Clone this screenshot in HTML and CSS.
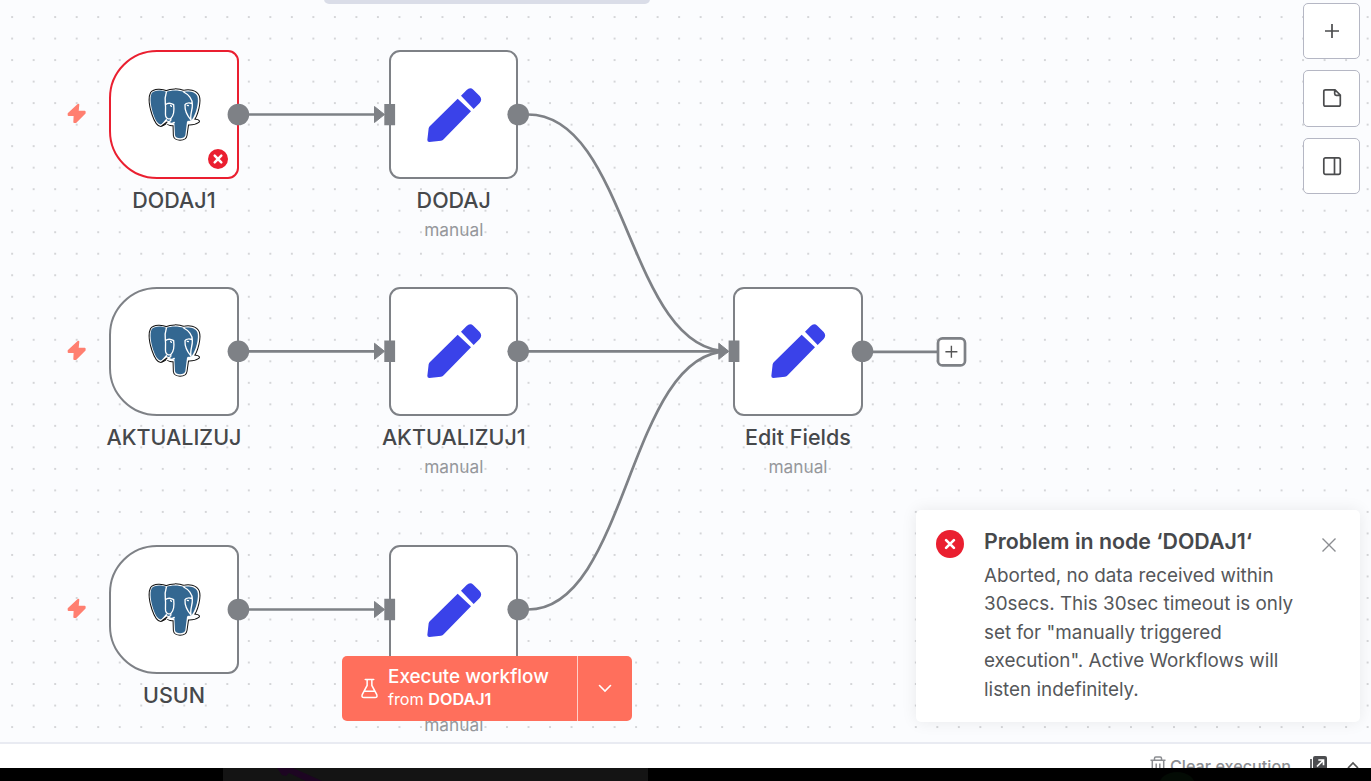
FILE: index.html
```html
<!DOCTYPE html>
<html lang="pl">
<head>
<meta charset="utf-8">
<title>Workflow</title>
<link rel="stylesheet" href="styles.css">
</head>
<body>
<svg class="defs" width="0" height="0">
  <defs>
    <symbol id="pencil" viewBox="168 140 168 168">
      <path fill="#3a42e9" d="M263 175 303 213 221 297Q218 301 213 301L178 305Q172 305 172 299L176 264Q177 260 180 257ZM273 166 290 149Q300 139 310 148L329 167Q338 178 329 188L311 206Z"/>
    </symbol>
    <symbol id="bolt" viewBox="200 306 64 68">
      <path fill="#ff7f70" stroke="#ff7f70" stroke-width="6" stroke-linejoin="round" d="M237 314 208 341V345H226L225 366H229L256 339V335H235Z"/>
    </symbol>
    <symbol id="elephant" viewBox="50 35 170 170">
      <g stroke-linecap="round" stroke-linejoin="round">
        <g fill="#111" stroke="#111" stroke-width="11">
          <path id="head" d="M108 50C95 44 72 43 64 54C57 68 62 96 69 117C75 135 84 151 93 149C98 148 105 142 109 137C115 146 124 149 132 146L133 180C134 194 164 194 166 180L171 145C184 146 196 143 203 138C200 135 194 137 187 134C199 119 209 79 203 63C197 47 174 45 160 49C145 43 122 43 108 50Z"/>
        </g>
        <use href="#head" fill="#fff" stroke="#fff" stroke-width="5"/>
        <path fill="#336791" d="M108 50C95 44 72 43 64 54C57 68 62 96 69 117C75 135 84 149 92 147C98 145 105 137 108 132C115 141 124 145 132 143L134 180C135 192 163 192 165 180L170 139L184 134C197 119 207 79 201 63C195 49 174 47 160 50C145 44 122 44 108 50Z"/>
        <g fill="none" stroke="#fff" stroke-width="4">
          <path d="M108 51C103 66 104 78 105 86C107 100 104 113 106 122C108 130 115 133 122 129C130 121 132 105 130 88C120 82 111 83 105 88M96 147 108 133M121 130C125 139 112 140 104 139C110 147 123 148 132 141"/>
          <path d="M160 50C174 57 187 72 186 88C187 103 178 119 182 133M164 88C168 82 178 82 185 85M164 89C163 106 172 122 181 133M173 138C183 141 196 140 202 138M121 90 123 93M171 90 174 91"/>
        </g>
        <path fill="none" stroke="#111" stroke-width="3.5" d="M95 151 110 140"/>
      </g>
    </symbol>
    <symbol id="error" viewBox="0 0 20 20">
      <circle cx="10" cy="10" r="10" fill="#ea1f30"/>
      <path d="m6.7 6.7 6.6 6.6m0-6.6-6.6 6.6" stroke="#fff" stroke-width="2.5" stroke-linecap="round"/>
    </symbol>
    <symbol id="error-small" viewBox="0 0 20 20">
      <circle cx="10" cy="10" r="10" fill="#ea1f30"/>
      <path d="m7.2 7.2 5.6 5.6m0-5.6-5.6 5.6" stroke="#fff" stroke-width="1.9" stroke-linecap="round"/>
    </symbol>
  </defs>
</svg>

<main class="canvas">
  <div class="top-pill"></div>

  <div class="node trigger failed col-1 row-1">
    <svg class="bolt"><use href="#bolt"/></svg>
    <svg class="elephant"><use href="#elephant"/></svg>
    <svg class="status"><use href="#error"/></svg>
    <div class="caption"><div class="name">DODAJ1</div></div>
  </div>
  <div class="node trigger col-1 row-2">
    <svg class="bolt"><use href="#bolt"/></svg>
    <svg class="elephant"><use href="#elephant"/></svg>
    <div class="caption"><div class="name">AKTUALIZUJ</div></div>
  </div>
  <div class="node trigger col-1 row-3">
    <svg class="bolt"><use href="#bolt"/></svg>
    <svg class="elephant"><use href="#elephant"/></svg>
    <div class="caption"><div class="name">USUN</div></div>
  </div>
  <div class="node col-2 row-1">
    <svg class="pencil"><use href="#pencil"/></svg>
    <div class="caption"><div class="name">DODAJ</div><div class="mode">manual</div></div>
  </div>
  <div class="node col-2 row-2">
    <svg class="pencil"><use href="#pencil"/></svg>
    <div class="caption"><div class="name">AKTUALIZUJ1</div><div class="mode">manual</div></div>
  </div>
  <div class="node col-2 row-3">
    <svg class="pencil"><use href="#pencil"/></svg>
    <div class="caption"><div class="name"></div><div class="mode">manual</div></div>
  </div>
  <div class="node col-3 row-2">
    <svg class="pencil"><use href="#pencil"/></svg>
    <div class="caption"><div class="name">Edit Fields</div><div class="mode">manual</div></div>
  </div>

  <svg class="edges" width="1371" height="742">
    <g fill="none" stroke="#7e8186" stroke-width="2.7">
      <path d="M238 114.5H376M238 351.3H376M238 609.5H376M518 351.3H722M862 351.8H938"/>
      <path d="M518 114.5H528C628 114.5 628 351.3 728 351.3M518 609.5H528C628 609.5 628 351.3 728 351.3"/>
    </g>
    <g fill="#7e8186">
      <circle cx="238.4" cy="114.5" r="10.8"/><circle cx="238.4" cy="351.3" r="10.8"/><circle cx="238.4" cy="609.5" r="10.8"/>
      <circle cx="518.2" cy="114.5" r="10.8"/><circle cx="518.2" cy="351.3" r="10.8"/><circle cx="518.2" cy="609.5" r="10.8"/>
      <circle cx="862.5" cy="351.3" r="10.8"/>
      <path d="M384.3 103.9h10.8v21.4h-10.8zM384.3 340.6h10.8V362h-10.8zM384.3 598.8h10.8v21.4h-10.8zM728.6 340.6h10.8V362h-10.8z"/>
      <path stroke="#7e8186" stroke-linejoin="round" d="M374.5 106.5v16l10-8zM374.5 343.3v16l10-8zM374.5 601.5v16l10-8zM718.8 343.3v16l10-8z"/>
    </g>
    <rect x="938" y="338.4" width="27" height="27" rx="4.5" fill="#fff" stroke="#7e8186" stroke-width="2.7"/>
    <path d="M951.4 345.7v12M945.4 351.7h12" stroke="#555" stroke-width="1.4"/>
  </svg>

  <div class="tools">
    <div class="tool"><svg width="20" height="20" viewBox="0 0 20 20"><path d="M10 3v14M3 10h14"/></svg></div>
    <div class="tool"><svg width="20" height="20" viewBox="0 0 20 20"><path d="M3.5 1.8H13L18.3 7v9.5q0 1.7-1.7 1.7H3.5q-1.7 0-1.7-1.7v-13q0-1.7 1.7-1.7ZM12.7 2v3.8q0 1.5 1.5 1.5h4"/></svg></div>
    <div class="tool"><svg width="20" height="20" viewBox="0 0 20 20"><rect x="1.8" y="1.8" width="16.5" height="16.5" rx="1.7"/><path d="M12.5 2v16"/></svg></div>
  </div>

  <div class="execute">
    <div class="execute-main">
      <svg width="17" height="21" viewBox="0 0 18 21"><path d="M4.5 1h9M6.5 1v6.3L1.3 17q-.9 3 1.8 3h11.8q2.7 0 1.8-3L11.5 7.3V1M4 13.5h10"/></svg>
      <div class="execute-text"><div class="execute-title">Execute workflow</div><div class="execute-from">from <b>DODAJ1</b></div></div>
    </div>
    <div class="execute-more"><svg width="14" height="9" viewBox="0 0 14 9"><path d="m1.5 1.5 5.5 5.5 5.5-5.5"/></svg></div>
  </div>

  <div class="toast">
    <svg class="toast-icon"><use href="#error-small"/></svg>
    <div class="toast-content">
      <div class="toast-title">Problem in node ‘DODAJ1‘</div>
      <div class="toast-text">Aborted, no data received within<br>30secs. This 30sec timeout is only<br>set for "manually triggered<br>execution". Active Workflows will<br>listen indefinitely.</div>
    </div>
    <svg class="close" viewBox="0 0 14 14"><path d="m.5.5 13 13m0-13-13 13"/></svg>
  </div>
</main>

<footer class="logs">
  <svg class="trash" width="16" height="19" viewBox="0 0 16 19"><path d="M.5 4.2h15M4.5 4V2.3Q4.5 1 5.8 1h4.4q1.3 0 1.3 1.3V4M2.3 4.5V18M13.7 4.5V18M6.2 7.5V18M9.8 7.5V18"/></svg>
  <span class="clear">Clear execution</span>
  <svg class="popout" width="17" height="18" viewBox="0 0 17 18"><rect x="3" width="14" height="15" rx="2" fill="#4c4d50"/><path d="M1 3v15" stroke="#4c4d50" stroke-width="1.7"/><path d="M7 10.5 13 4.5M8.3 4h5.2v5.2" fill="none" stroke="#fff" stroke-width="1.7"/></svg>
  <svg class="up" width="12" height="8" viewBox="0 0 12 8"><path d="m1 7 5-5 5 5" fill="none" stroke="#555" stroke-width="1.7"/></svg>
</footer>
<div class="strip">
  <div class="strip-panel"><svg width="45" height="13" viewBox="0 0 45 13"><path fill="#1d0522" d="M0 0H16L45 13H29L12 5 9 8 5 7Z"/></svg></div>
  <svg class="strip-glow" width="36" height="13" viewBox="0 0 36 13"><ellipse cx="18" cy="17" rx="18" ry="13" fill="#030b04"/></svg>
</div>
</body>
</html>
```
FILE: styles.css
```css
* { box-sizing: border-box; }
body {
  margin: 0;
  width: 1371px;
  height: 781px;
  overflow: hidden;
  display: flex;
  flex-direction: column;
  background: #fff;
  font-family: Inter, sans-serif;
  color: #46484b;
}
svg { display: block; flex: none; }
.defs { position: absolute; }

.canvas {
  position: relative;
  flex: none;
  height: 744px;
  overflow: hidden;
  border-bottom: 2px solid #e9ebf2;
  background-color: #fbfcfe;
  background-image: radial-gradient(circle at center, #cfd0d3 0.6px, transparent 1.3px);
  background-size: 21.52px 21.52px;
  background-position: 1.4px 6.3px;
}
.top-pill {
  position: absolute;
  left: 324px;
  top: -8px;
  width: 325.5px;
  height: 12px;
  border-radius: 5px;
  background: #dadde8;
}
.edges { position: absolute; left: 0; top: 0; }

/* nodes on the canvas */
.node {
  position: absolute;
  width: 129.2px;
  height: 129.2px;
  border: 2px solid #7e8186;
  border-radius: 11px;
  background: #fff;
}
.trigger { border-radius: 48px 11px 11px 48px; }
.failed { border-color: #ea1f30; }
.col-1 { left: 109.4px; }
.col-2 { left: 389.2px; }
.col-3 { left: 733.4px; }
.row-1 { top: 50px; }
.row-2 { top: 286.7px; }
.row-3 { top: 545px; }
.bolt { position: absolute; left: -45px; top: 50px; width: 21.3px; height: 22.7px; }
.elephant { position: absolute; left: 35.3px; top: 34.7px; width: 56.7px; height: 56.7px; }
.pencil { position: absolute; left: 34.8px; top: 34.7px; width: 56px; height: 56px; }
.status { position: absolute; right: 9px; bottom: 8.5px; width: 20px; height: 20px; }
.caption {
  position: absolute;
  left: -60px;
  right: -60px;
  top: 133.3px;
  text-align: center;
}
.name { height: 30px; font-size: 21.5px; font-weight: 450; line-height: 30px; }
.mode { font-size: 17.3px; line-height: 24px; margin-top: 3px; color: #95979b; }

/* canvas tool buttons */
.tools {
  position: absolute;
  left: 1303px;
  top: 3px;
  display: flex;
  flex-direction: column;
  gap: 11px;
}
.tool {
  width: 57px;
  height: 56.3px;
  display: grid;
  place-items: center;
  border: 1px solid #b5b7c4;
  border-radius: 5px;
  background: #fff;
}
.tool path, .tool rect { fill: none; stroke: #4b4c4e; stroke-width: 1.7; }

/* execute split button */
.execute {
  position: absolute;
  left: 341.5px;
  top: 656px;
  width: 290px;
  height: 65px;
  display: flex;
  border-radius: 5px;
  overflow: hidden;
  background: #ff6f5c;
  color: #fff;
}
.execute path { fill: none; stroke: #fff; stroke-width: 1.6; stroke-linecap: round; }
.execute-main {
  width: 236px;
  padding-left: 19px;
  display: flex;
  align-items: center;
  gap: 10.5px;
  border-right: 1.5px solid #ffd0c9;
}
.execute-title { font-size: 18.9px; font-weight: 500; line-height: 23px; margin-top: -1px; }
.execute-from { font-size: 16.2px; line-height: 23px; }
.execute-from b { font-weight: 600; }
.execute-more { flex: 1; display: grid; place-items: center; }

/* error toast */
.toast {
  position: absolute;
  left: 916px;
  top: 510px;
  width: 444px;
  height: 212px;
  padding: 16px 24px 0 20px;
  display: flex;
  border-radius: 5px;
  background: #fff;
  box-shadow: 0 0 16px rgba(0, 0, 0, .08);
}
.toast-icon { width: 28px; height: 28px; margin: 4px 20px 0 0; }
.toast-content { flex: 1; }
.toast-title { font-size: 21.35px; font-weight: 600; line-height: 30px; white-space: nowrap; }
.toast-text { font-size: 18.85px; line-height: 28.4px; margin-top: 6px; white-space: nowrap; color: #55575a; }
.close { width: 14px; height: 14px; margin-top: 12px; }
.close path { stroke: #8b8d91; stroke-width: 1.4; }

/* logs bar, cut by the strip under it */
.logs {
  flex: none;
  height: 24px;
  padding: 12px 11px 0 1150px;
  display: flex;
  align-items: flex-start;
  overflow: hidden;
  background: #fff;
}
.trash path { fill: none; stroke: #8b8d91; stroke-width: 1.5; }
.clear { margin-left: 4px; width: 140px; font-size: 16.2px; line-height: 20px; font-weight: 500; color: #8b8d91; white-space: nowrap; }
.up { margin: 5px 0 0 20px; }
.strip {
  flex: 1;
  display: flex;
  padding-left: 223px;
  background: #000;
}
.strip-panel { width: 425px; padding-left: 54px; background: #141414; }
.strip-glow { margin-left: 511px; }
```
